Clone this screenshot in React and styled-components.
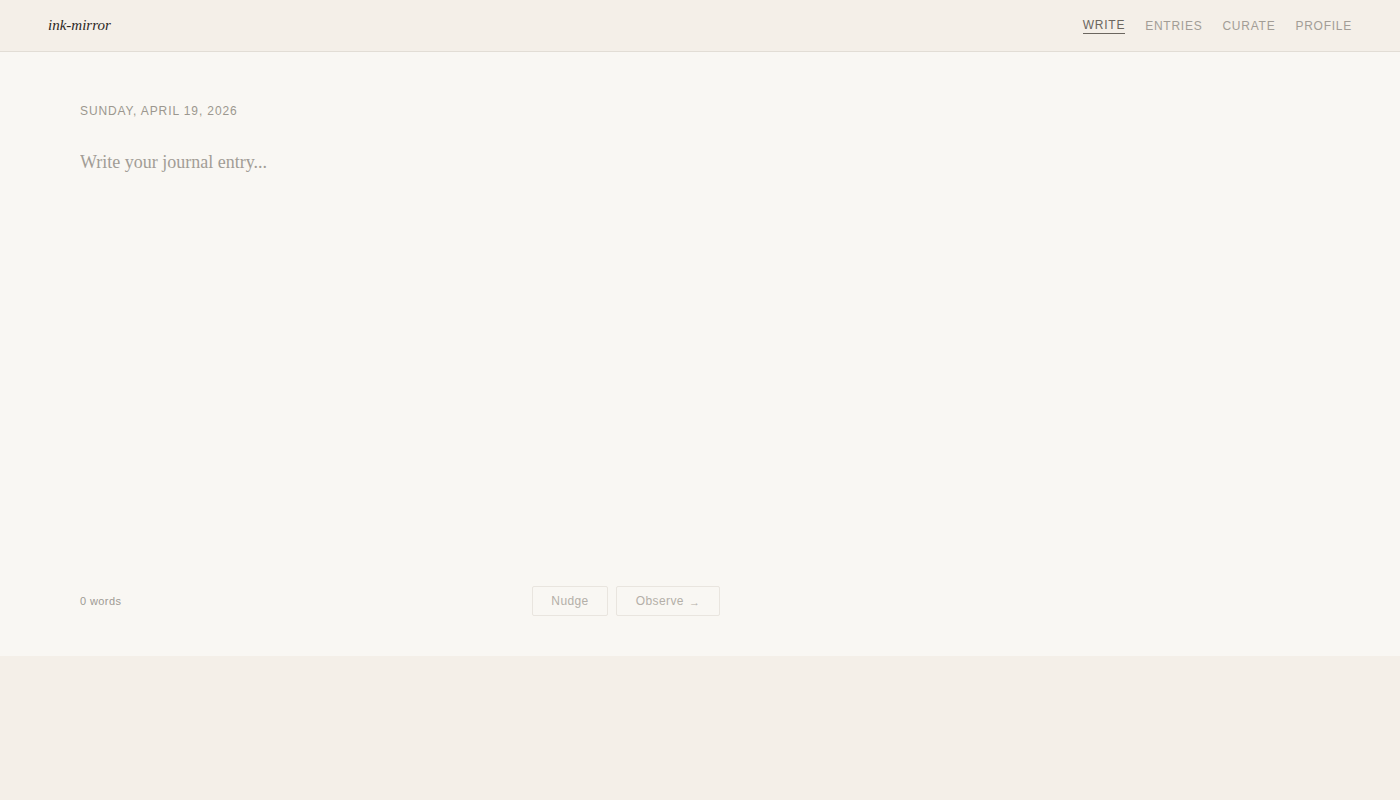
import React, { useState } from 'react';
import styled, { createGlobalStyle } from 'styled-components';

const GlobalStyle = createGlobalStyle`
  html, body {
    margin: 0;
    padding: 0;
    background: #f4efe8;
    font-family: "Liberation Sans", Arial, sans-serif;
  }
  * { box-sizing: border-box; }
`;

const Header = styled.header`
  height: 52px;
  display: flex;
  align-items: center;
  justify-content: space-between;
  padding: 2px 48px 0;
  background: #f4efe8;
  border-bottom: 1px solid #e2ddd5;
`;

const Logo = styled.div`
  font-family: "Liberation Serif", "Times New Roman", serif;
  font-style: italic;
  font-size: 15px;
  color: #2b2824;
  margin-top: -2px;
`;

const Nav = styled.nav`
  display: flex;
  gap: 20px;
  align-items: center;
`;

const NavItem = styled.a`
  font-size: 12px;
  letter-spacing: 0.75px;
  text-transform: uppercase;
  text-decoration: none;
  cursor: pointer;
  color: ${({ $active }) => ($active ? '#6b665f' : '#a29d96')};
  padding-bottom: 1px;
  border-bottom: 1px solid ${({ $active }) => ($active ? '#6b665f' : 'transparent')};
  margin-top: ${({ $active }) => ($active ? '-2px' : '0')};
`;

const Main = styled.main`
  background: #f9f7f3;
`;

const Editor = styled.section`
  max-width: 800px;
  padding: 52px 80px 40px;
  display: flex;
  flex-direction: column;
`;

const DateLine = styled.div`
  font-size: 12px;
  letter-spacing: 0.9px;
  text-transform: uppercase;
  color: #9c978f;
  line-height: 14px;
  margin-bottom: 29px;
`;

const EntryInput = styled.textarea`
  width: 100%;
  height: 419px;
  border: none;
  outline: none;
  resize: none;
  background: transparent;
  padding: 0;
  font-family: "Liberation Serif", "Times New Roman", serif;
  font-size: 18px;
  line-height: 30px;
  color: #3a3631;
  margin-bottom: 20px;

  &::placeholder {
    color: #a29d96;
  }
`;

const Footer = styled.div`
  display: flex;
  justify-content: space-between;
  align-items: center;
`;

const WordCount = styled.span`
  font-size: 11px;
  letter-spacing: 0.4px;
  color: #9e9a94;
`;

const Actions = styled.div`
  display: flex;
  gap: 8px;
`;

const ActionButton = styled.button`
  height: 30px;
  width: ${({ $width }) => $width}px;
  border: 1px solid #e9e5df;
  border-radius: 2px;
  background: #f9f7f3;
  color: #b4afa8;
  font-family: "Liberation Sans", Arial, sans-serif;
  font-size: 12px;
  letter-spacing: 0.4px;
  cursor: default;
  padding: 0;
`;

const Arrow = styled.span`
  font-size: 11px;
  margin-left: 5px;
  position: relative;
  top: 1px;
`;

export default function App() {
  const [text, setText] = useState('');
  const words = text.trim() ? text.trim().split(/\s+/).length : 0;

  return (
    <>
      <GlobalStyle />
      <Header>
        <Logo>ink-mirror</Logo>
        <Nav>
          <NavItem $active>Write</NavItem>
          <NavItem>Entries</NavItem>
          <NavItem>Curate</NavItem>
          <NavItem>Profile</NavItem>
        </Nav>
      </Header>
      <Main>
        <Editor>
          <DateLine>Sunday, April 19, 2026</DateLine>
          <EntryInput
            placeholder="Write your journal entry..."
            value={text}
            onChange={(e) => setText(e.target.value)}
          />
          <Footer>
            <WordCount>{words} words</WordCount>
            <Actions>
              <ActionButton $width={76} disabled>Nudge</ActionButton>
              <ActionButton $width={104} disabled>
                Observe<Arrow>→</Arrow>
              </ActionButton>
            </Actions>
          </Footer>
        </Editor>
      </Main>
    </>
  );
}
